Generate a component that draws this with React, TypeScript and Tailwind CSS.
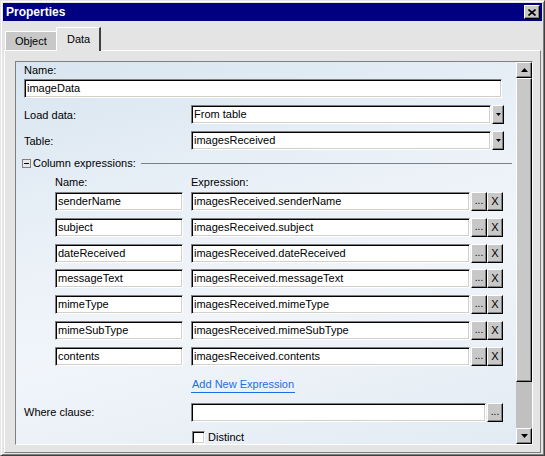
import React from "react";

const sunken =
  "bg-white border border-t-[#808080] border-l-[#808080] border-b-white border-r-white shadow-[inset_1px_1px_0_#000,inset_-1px_-1px_0_#d4d0c8]";
const raised =
  "bg-[#c8c8c8] border border-t-white border-l-white border-b-black border-r-black shadow-[inset_-1px_-1px_0_#808080]";

function Field({ value, w }: { value?: string; w: string }) {
  return (
    <div className={`${sunken} ${w} h-[19px] flex items-center pl-[2px] leading-none whitespace-nowrap overflow-hidden`}>
      {value}
    </div>
  );
}

function DotsBtn() {
  return (
    <div className={`${raised} w-[16px] h-[19px] flex items-end justify-center pb-[4px] leading-none text-[10px]`}>
      ...
    </div>
  );
}

function XBtn() {
  return (
    <div className={`${raised} w-[16px] h-[19px] flex items-center justify-center leading-none text-[11px]`}>
      X
    </div>
  );
}

function DownTri({ w = 7 }: { w?: number }) {
  const h = Math.ceil(w / 2);
  return (
    <svg width={w} height={h} viewBox={`0 0 ${w} ${h}`}>
      <path d={`M0 0H${w}L${w / 2} ${h}Z`} fill="#000" />
    </svg>
  );
}

function UpTri() {
  return (
    <svg width="7" height="4" viewBox="0 0 7 4">
      <path d="M0 4H7L3.5 0Z" fill="#000" />
    </svg>
  );
}

function Select({ value }: { value: string }) {
  return (
    <div className="flex h-[19px]">
      <Field value={value} w="w-[300px]" />
      <div className={`${raised} ml-[1px] w-[12px] h-[19px] flex items-center justify-center`}>
        <DownTri w={5} />
      </div>
    </div>
  );
}

const rows: [string, string][] = [
  ["senderName", "imagesReceived.senderName"],
  ["subject", "imagesReceived.subject"],
  ["dateReceived", "imagesReceived.dateReceived"],
  ["messageText", "imagesReceived.messageText"],
  ["mimeType", "imagesReceived.mimeType"],
  ["mimeSubType", "imagesReceived.mimeSubType"],
  ["contents", "imagesReceived.contents"],
];

export default function App() {
  return (
    <div className="w-[545px] h-[456px] bg-[#e4e4e4] font-['Liberation_Sans',Arial,sans-serif] text-[11px] text-black flex flex-col border border-t-[#e4e4e4] border-l-[#e4e4e4] border-b-[#404040] border-r-[#404040] shadow-[inset_1px_1px_0_#fff,inset_-1px_-1px_0_#808080] p-[2px] overflow-hidden">
      {/* Title bar */}
      <div className="h-[18px] bg-[#000080] flex items-center justify-between pl-[3px] pr-[2px] shrink-0">
        <span className="text-white font-bold text-[12px] leading-none">Properties</span>
        <div className={`${raised} w-[16px] h-[14px] flex items-center justify-center`}>
          <svg width="8" height="7" viewBox="0 0 8 7">
            <path d="M0.5 0.5L7.5 6.5M7.5 0.5L0.5 6.5" stroke="#000" strokeWidth="1.6" />
          </svg>
        </div>
      </div>

      {/* Tabs */}
      <div className="h-[29px] flex items-end pl-[2px] shrink-0 relative z-10">
        <div className="h-[19px] w-[51px] bg-[#c8c8c8] border-t border-l border-white flex items-center pl-[9px] leading-none">
          Object
        </div>
        <div className="h-[24px] w-[45px] bg-[#e4e4e4] border-t border-l border-white border-r-2 border-r-[#404040] flex items-center pl-[10px] pb-[1px] leading-none -mb-[1px]">
          Data
        </div>
      </div>

      {/* Panel */}
      <div className="flex-1 mx-[1px] mb-[4px] border border-t-white border-l-white border-b-[#808080] border-r-[#808080] pl-[10px] pt-[10px] pr-[7px] pb-[7px] flex">
        <div className="flex-1 flex border border-t-[#808080] border-l-[#808080] border-b-white border-r-white">
          {/* Main content */}
          <div className="flex-1 flex flex-col pl-[8px] overflow-hidden bg-[linear-gradient(165deg,#d8e5f0_0%,#e9f0f7_35%,#f1f5fa_60%,#e2ebf3_100%)]">
            <div className="mt-[2px] h-[12px] leading-[12px]">Name:</div>
            <div className="mt-[3px]">
              <Field value="imageData" w="w-[478px]" />
            </div>

            <div className="mt-[7px] flex items-center h-[19px]">
              <div className="w-[167px] leading-[12px]">Load data:</div>
              <Select value="From table" />
            </div>

            <div className="mt-[7px] flex items-center h-[19px]">
              <div className="w-[167px] leading-[12px]">Table:</div>
              <Select value="imagesReceived" />
            </div>

            <div className="mt-[7px] h-[12px] flex items-center">
              <div className="-ml-[2px] w-[9px] h-[9px] shrink-0 border border-[#808080] bg-[#e8e8e8] flex items-center justify-center">
                <div className="w-[5px] h-px bg-black" />
              </div>
              <span className="ml-[2px] leading-[12px] whitespace-nowrap">Column expressions:</span>
              <div className="ml-[5px] mr-[4px] flex-1 h-px bg-[#808080]" />
            </div>

            <div className="mt-[7px] h-[12px] flex items-center leading-[12px]">
              <div className="w-[167px] pl-[31px]">Name:</div>
              <div>Expression:</div>
            </div>

            <div className="mt-[4px] flex flex-col gap-[6.83px]">
              {rows.map(([n, e]) => (
                <div key={n} className="flex h-[19px]">
                  <div className="ml-[31px]">
                    <Field value={n} w="w-[128px]" />
                  </div>
                  <div className="ml-[8px]">
                    <Field value={e} w="w-[279px]" />
                  </div>
                  <div className="ml-[1px]">
                    <DotsBtn />
                  </div>
                  <XBtn />
                </div>
              ))}
            </div>

            <div className="mt-[10px] pl-[167px]">
              <span className="inline-block pl-[1px] pr-[1px] leading-[12px] pb-[2px] border-b border-[#1c6ee8] text-[#1c6ee8] whitespace-nowrap">
                Add New Expression
              </span>
            </div>

            <div className="mt-[10px] flex items-center h-[19px]">
              <div className="w-[167px] leading-[12px]">Where clause:</div>
              <Field w="w-[295px]" />
              <div className="ml-[1px]">
                <DotsBtn />
              </div>
            </div>

            <div className="mt-[9px] flex items-center pl-[168px] h-[13px]">
              <div className={`${sunken} w-[13px] h-[13px]`} />
              <span className="ml-[3px] leading-[12px]">Distinct</span>
            </div>
          </div>

          {/* Scrollbar */}
          <div className="w-[16px] bg-[#c0c0c0] flex flex-col">
            <div className={`${raised} h-[16px] flex items-center justify-center`}>
              <UpTri />
            </div>
            <div className={`${raised} h-[304px]`} />
            <div className="flex-1" />
            <div className={`${raised} h-[16px] flex items-center justify-center`}>
              <DownTri />
            </div>
          </div>
        </div>
      </div>
    </div>
  );
}
